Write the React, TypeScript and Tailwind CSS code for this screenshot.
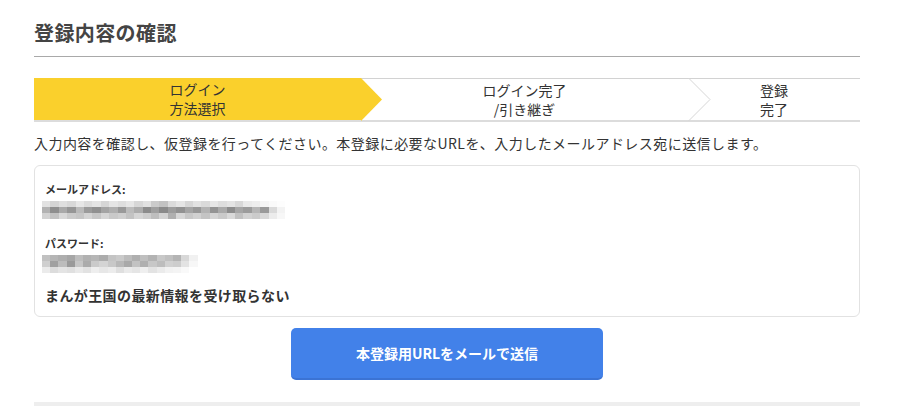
import React from "react";

const emailRows: string[][] = [
  ["#e2e2e2","#d4d4d4","#dfdfdf","#d8d8d8","#e7e7e7","#dcdcdc","#e4e4e4","#d6d6d6","#e5e5e5","#dedede","#e6e6e6","#d7d7d7","#e1e1e1","#cbcbcb","#c2c2c2","#dbdbdb","#e5e5e5","#d6d6d6","#e2e2e2","#dadada","#e7e7e7","#dedede","#e4e4e4","#d8d8d8","#eaeaea","#eeeeee","#f5f5f5","#fafafa","#fdfdfd","#ffffff"],
  ["#b2b2b2","#8e8e8e","#a9a9a9","#969696","#bababa","#9b9b9b","#909090","#a4a4a4","#afafaf","#999999","#bcbcbc","#acacac","#8c8c8c","#9f9f9f","#8a8a8a","#9d9d9d","#929292","#a5a5a5","#989898","#b3b3b3","#949494","#aaaaaa","#8d8d8d","#a6a6a6","#9c9c9c","#b6b6b6","#9a9a9a","#dadada","#f3f3f3","#ffffff"],
  ["#d2d2d2","#c2c2c2","#d8d8d8","#cbcbcb","#c6c6c6","#d4d4d4","#c7c7c7","#d6d6d6","#c9c9c9","#cfcfcf","#c3c3c3","#d5d5d5","#cdcdcd","#bebebe","#d3d3d3","#b0b0b0","#d7d7d7","#c8c8c8","#d1d1d1","#c4c4c4","#d4d4d4","#cacaca","#d9d9d9","#c1c1c1","#d2d2d2","#cbcbcb","#d8d8d8","#ececec","#f7f7f7","#ffffff"],
];

const pwRows: string[][] = [
  ["#c1c1c1","#b5b5b5","#aeaeae","#a6a6a6","#bdbdbd","#b1b1b1","#b6b6b6","#acacac","#c4c4c4","#cacaca","#bcbcbc","#afafaf","#bfbfbf","#b3b3b3","#c8c8c8","#c0c0c0","#b4b4b4","#d8d8d8","#f1f1f1"],
  ["#cfcfcf","#a0a0a0","#bcbcbc","#9a9a9a","#c6c6c6","#ababab","#cacaca","#d4d4d4","#c8c8c8","#b8b8b8","#a9a9a9","#c2c2c2","#b0b0b0","#c7c7c7","#bdbdbd","#d1d1d1","#cdcdcd","#e3e3e3","#f7f7f7"],
  ["#ebebeb","#dcdcdc","#e4e4e4","#e0e0e0","#e9e9e9","#e2e2e2","#eeeeee","#e7e7e7","#ececec","#dfdfdf","#eaeaea","#e5e5e5","#efefef","#e3e3e3","#ebebeb","#f2f2f2","#f4f4f4","#f9f9f9","#ffffff"],
];

function Mosaic({ rows, cell }: { rows: string[][]; cell: number }) {
  return (
    <div className="flex flex-col" aria-hidden="true">
      {rows.map((r, i) => (
        <div key={i} className="flex">
          {r.map((c, j) => (
            <div key={j} style={{ backgroundColor: c, width: cell, height: 6 }} />
          ))}
        </div>
      ))}
    </div>
  );
}

export default function App() {
  return (
    <div
      className="w-[900px] h-[406px] overflow-hidden bg-white text-[#333]"
      style={{ fontFamily: '"Noto Sans CJK JP", "Noto Sans", sans-serif' }}
    >
      <div className="ml-[34px] w-[826px]">
        <h1 className="pt-[19px] pb-[9px] text-[20px] leading-[28px] font-bold tracking-[0.4px] text-[#444] border-b border-[#a9a9a9]">
          登録内容の確認
        </h1>

        <div className="mt-[21px] flex h-[44px] border-t border-[#d2d2d2] border-b-2 border-b-[#dcdcdc] text-[14px] leading-[19px] text-[#333]">
          <div className="relative -mt-px w-[327px] bg-[#fad02c] flex flex-col items-center justify-center">
            <span>ログイン</span>
            <span>方法選択</span>
            <svg
              className="absolute left-full top-0 h-[43px] w-[21px] z-10"
              viewBox="0 0 21 43"
              preserveAspectRatio="none"
            >
              <polygon points="0,0 21,21.5 0,43" fill="#fad02c" />
            </svg>
          </div>
          <div className="relative w-[327px] flex flex-col items-center justify-center">
            <span>ログイン完了</span>
            <span>/引き継ぎ</span>
            <svg
              className="absolute left-full -top-px h-[43px] w-[23px] z-10"
              viewBox="0 0 23 43"
              preserveAspectRatio="none"
            >
              <polyline points="0.5,0 22,21.5 0.5,43" fill="none" stroke="#d6d6d6" strokeWidth="1" />
            </svg>
          </div>
          <div className="flex-1 flex flex-col items-center justify-center">
            <span>登録</span>
            <span>完了</span>
          </div>
        </div>

        <p className="mt-[11px] text-[14px] leading-[20px] tracking-[0.45px] text-[#333]">
          入力内容を確認し、仮登録を行ってください。本登録に必要なURLを、入力したメールアドレス宛に送信します。
        </p>

        <div className="mt-[12px] h-[152px] rounded-[6px] border border-[#e2e2e2] pl-[10px] pt-[16px]">
          <div className="text-[11px] leading-[14px] font-bold text-[#333]">メールアドレス:</div>
          <div className="mt-[5px] -ml-[3px]">
            <Mosaic rows={emailRows} cell={8.4} />
          </div>
          <div className="mt-[17px] text-[11px] leading-[14px] font-bold text-[#333]">パスワード:</div>
          <div className="mt-[5px] -ml-[3px]">
            <Mosaic rows={pwRows} cell={8.2} />
          </div>
          <div className="mt-[12px] text-[14px] leading-[20px] font-bold tracking-[0.4px] text-[#333]">
            まんが王国の最新情報を受け取らない
          </div>
        </div>

        <div className="mt-[11px] flex justify-center">
          <button className="h-[52px] w-[312px] rounded-[5px] bg-[#4281e9] border-b-2 border-[#3b73d4] text-white text-[14px] font-bold">
            本登録用URLをメールで送信
          </button>
        </div>

        <div className="mt-[22px] h-[10px] bg-[#eeeeee]" />
      </div>
    </div>
  );
}
